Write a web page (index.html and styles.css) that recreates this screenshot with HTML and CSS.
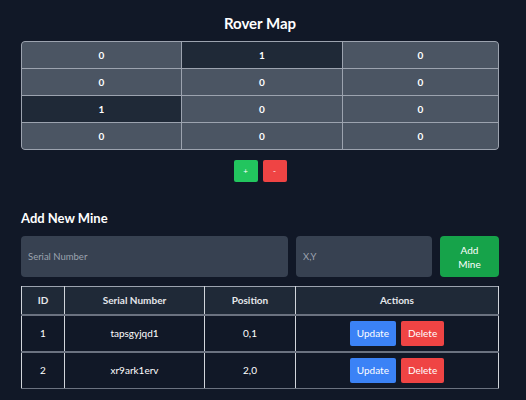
FILE: index.html
```html
<!DOCTYPE html>
<html>
<head>
<meta charset="utf-8">
<link rel="stylesheet" href="styles.css">
</head>
<body>
<div class="page">
  <h1 class="title">Rover Map</h1>
  <div class="map">
    <div class="cell">0</div><div class="cell mine">1</div><div class="cell">0</div>
    <div class="cell">0</div><div class="cell">0</div><div class="cell">0</div>
    <div class="cell mine">1</div><div class="cell">0</div><div class="cell">0</div>
    <div class="cell">0</div><div class="cell">0</div><div class="cell">0</div>
  </div>
  <div class="size-controls">
    <button class="btn-sq green">+</button>
    <button class="btn-sq red">-</button>
  </div>
  <h2 class="subtitle">Add New Mine</h2>
  <div class="form">
    <input class="input serial" placeholder="Serial Number">
    <input class="input pos" placeholder="X,Y">
    <button class="add-btn">Add<br>Mine</button>
  </div>
  <table class="mines">
    <thead>
      <tr><th class="c-id">ID</th><th class="c-serial">Serial Number</th><th class="c-pos">Position</th><th>Actions</th></tr>
    </thead>
    <tbody>
      <tr><td>1</td><td>tapsgyjqd1</td><td>0,1</td><td><div class="actions"><button class="btn blue">Update</button><button class="btn red">Delete</button></div></td></tr>
      <tr><td>2</td><td>xr9ark1erv</td><td>2,0</td><td><div class="actions"><button class="btn blue">Update</button><button class="btn red">Delete</button></div></td></tr>
    </tbody>
  </table>
</div>
</body>
</html>
```
FILE: styles.css
```css
* { box-sizing: border-box; }
html, body { margin: 0; padding: 0; background: #111827; }
body { font-family: "Lato", "Open Sans", sans-serif; color: #fff; }
.page { padding: 13px 27px 0 21px; width: 526px; }
.title { margin: 0 0 8px; font-size: 15px; font-weight: 700; text-align: center; line-height: 20px; }
.map {
  display: grid;
  grid-template-columns: 159px 160px 1fr;
  grid-auto-rows: 26px;
  gap: 1px;
  background: #9ca3af;
  border: 1px solid #9ca3af;
  border-radius: 4px;
  overflow: hidden;
  width: 478px;
}
.cell { background: #4b5563; display: flex; align-items: center; justify-content: center; font-size: 10px; font-weight: 700; }
.cell.mine { background: #1f2937; }
.size-controls { display: flex; justify-content: center; gap: 5px; margin-top: 10px; }
.btn-sq { width: 24px; height: 22px; border: none; border-radius: 2px; color: #fff; font-size: 8px; padding: 0; font-family: inherit; }
.green { background: #22c55e; }
.red { background: #ef4444; }
.blue { background: #3b82f6; }
.subtitle { margin: 28px 0 9px; font-size: 13px; font-weight: 700; line-height: 17px; }
.form { display: flex; gap: 8px; width: 478px; height: 41px; }
.input { background: #374151; border: none; border-radius: 4px; color: #fff; font-family: inherit; font-size: 9.5px; padding: 0 7px; }
.input::placeholder { color: #9ca3af; }
.serial { width: 267px; }
.pos { width: 136px; }
.add-btn { flex: 1; background: #16a34a; border: none; border-radius: 4px; color: #fff; font-family: inherit; font-size: 10px; line-height: 14px; }
.mines { margin-top: 9px; width: 478px; border-collapse: collapse; border: 1px solid #9ca3af; font-size: 10px; }
.mines th, .mines td { border-left: 1px solid #d1d5db; border-right: 1px solid #d1d5db; text-align: center; }
.mines th { background: #1f2937; height: 28px; font-weight: 700; color: #e5e7eb; border-bottom: 2px solid #6b7280; }
.mines td { height: 37px; border-bottom: 2px solid #6b7280; }
.mines tr:last-child td { border-bottom: 1px solid #6b7280; }
.c-id { width: 43px; }
.c-serial { width: 140px; }
.c-pos { width: 91px; }
.actions { display: flex; justify-content: center; gap: 5px; }
.btn { height: 25px; border: none; border-radius: 2px; color: #fff; font-family: inherit; font-size: 10px; padding: 0 7px; }
```
